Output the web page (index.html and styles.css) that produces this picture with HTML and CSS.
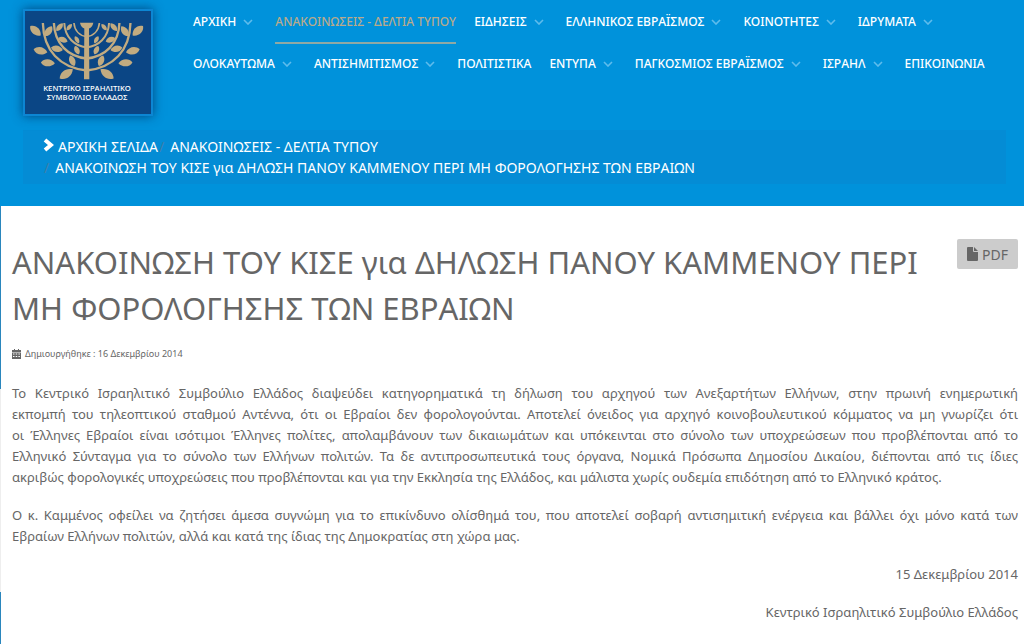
FILE: index.html
```html
<!DOCTYPE html>
<html lang="el">
<head>
<meta charset="UTF-8">
<meta name="viewport" content="width=device-width, initial-scale=1.0">
<title>Κεντρικό Ισραηλιτικό Συμβούλιο Ελλάδος</title>
<link rel="stylesheet" href="styles.css">
</head>
<body>

<svg class="symbols" aria-hidden="true">
    <symbol id="chevron" viewBox="0 0 10 6"><path d="M1 1l4 4 4-4" fill="none" stroke="currentColor" stroke-width="1.6"/></symbol>
</svg>

<header class="header">
    <div class="top">
        <a class="logo" href="#" aria-label="Αρχική">
            <svg viewBox="76 32 376 308">
                <g fill="none" stroke="#c2ab80" stroke-width="7">
                    <path d="M129 68C131 150 180 202 260 210C340 202 389 150 391 68"/>
                    <path d="M162 68C164 130 205 169 260 174C315 169 356 130 358 68"/>
                    <path d="M193 68C195 112 225 137 260 141C295 137 325 112 327 68" stroke-width="6"/>
                    <path d="M222 68C224 92 240 106 260 109C280 106 296 92 298 68" stroke-width="5"/>
                </g>
                <path fill="#c2ab80" d="M240 67h40q-3 14-13 17l1 152h-16l1-152q-10-3-13-17z"/>
                <g id="leaves" fill="#c2ab80">
                    <path transform="translate(107 91) rotate(42)" d="M-21 0C-12-15 10-15 21 0C10 15-12 15-21 0z"/>
                    <path transform="translate(146 92) rotate(-55)" d="M-18 0C-10-13 9-13 18 0C9 13-10 13-18 0z"/>
                    <path transform="translate(179 80) rotate(-50)" d="M-15 0C-8-10 7-10 15 0C7 10-8 10-15 0z"/>
                    <path transform="translate(208 80) rotate(-50)" d="M-12 0C-7-8 6-8 12 0C6 8-7 8-12 0z"/>
                    <path transform="translate(122 151) rotate(12)" d="M-21 0C-12-15 10-15 21 0C10 15-12 15-21 0z"/>
                    <path transform="translate(171 145) rotate(12)" d="M-18 0C-10-13 9-13 18 0C9 13-10 13-18 0z"/>
                    <path transform="translate(189 118) rotate(20)" d="M-15 0C-8-11 7-11 15 0C7 11-8 11-15 0z"/>
                    <path transform="translate(144 187) rotate(3)" d="M-21 0C-12-14 10-14 21 0C10 14-12 14-21 0z"/>
                    <path transform="translate(199 220) rotate(-35)" d="M-24 0C-12-16 10-16 24 0C10 16-12 16-24 0z"/>
                    <path transform="translate(217 181) rotate(68)" d="M-17 0C-9-12 8-12 17 0C8 12-9 12-17 0z"/>
                    <path transform="translate(231 149) rotate(65)" d="M-14 0C-8-10 7-10 14 0C7 10-8 10-14 0z"/>
                    <path transform="translate(231 118) rotate(60)" d="M-12 0C-7-8 6-8 12 0C6 8-7 8-12 0z"/>
                </g>
                <use href="#leaves" transform="translate(520 0) scale(-1 1)"/>
                <g class="logo-text">
                    <text x="261" y="272">ΚΕΝΤΡΙΚΟ ΙΣΡΑΗΛΙΤΙΚΟ</text>
                    <text x="261" y="298">ΣΥΜΒΟΥΛΙΟ ΕΛΛΑΔΟΣ</text>
                </g>
            </svg>
        </a>
        <nav>
            <ul class="menu">
                <li><a href="#">ΑΡΧΙΚΗ <svg class="chevron"><use href="#chevron"/></svg></a></li>
                <li><a class="active" href="#">ΑΝΑΚΟΙΝΩΣΕΙΣ - ΔΕΛΤΙΑ ΤΥΠΟΥ</a></li>
                <li><a href="#">ΕΙΔΗΣΕΙΣ <svg class="chevron"><use href="#chevron"/></svg></a></li>
                <li><a href="#">ΕΛΛΗΝΙΚΟΣ ΕΒΡΑΪΣΜΟΣ <svg class="chevron"><use href="#chevron"/></svg></a></li>
                <li><a href="#">ΚΟΙΝΟΤΗΤΕΣ <svg class="chevron"><use href="#chevron"/></svg></a></li>
                <li><a href="#">ΙΔΡΥΜΑΤΑ <svg class="chevron"><use href="#chevron"/></svg></a></li>
                <li><a href="#">ΟΛΟΚΑΥΤΩΜΑ <svg class="chevron"><use href="#chevron"/></svg></a></li>
                <li><a href="#">ΑΝΤΙΣΗΜΙΤΙΣΜΟΣ <svg class="chevron"><use href="#chevron"/></svg></a></li>
                <li><a href="#">ΠΟΛΙΤΙΣΤΙΚΑ</a></li>
                <li><a href="#">ΕΝΤΥΠΑ <svg class="chevron"><use href="#chevron"/></svg></a></li>
                <li><a href="#">ΠΑΓΚΟΣΜΙΟΣ ΕΒΡΑΪΣΜΟΣ <svg class="chevron"><use href="#chevron"/></svg></a></li>
                <li><a href="#">ΙΣΡΑΗΛ <svg class="chevron"><use href="#chevron"/></svg></a></li>
                <li><a href="#">ΕΠΙΚΟΙΝΩΝΙΑ</a></li>
            </ul>
        </nav>
    </div>
    <ol class="breadcrumb">
        <li><svg class="arrow" viewBox="0 0 11 14"><path d="M2 2l6 5-6 5" fill="none" stroke="#fff" stroke-width="4"/></svg><a href="#">ΑΡΧΙΚΗ ΣΕΛΙΔΑ</a></li>
        <li><a href="#">ΑΝΑΚΟΙΝΩΣΕΙΣ - ΔΕΛΤΙΑ ΤΥΠΟΥ</a></li>
        <li>ΑΝΑΚΟΙΝΩΣΗ ΤΟΥ ΚΙΣΕ για ΔΗΛΩΣΗ ΠΑΝΟΥ ΚΑΜΜΕΝΟΥ ΠΕΡΙ ΜΗ ΦΟΡΟΛΟΓΗΣΗΣ ΤΩΝ ΕΒΡΑΙΩΝ</li>
    </ol>
</header>

<main class="article">
    <div class="title">
        <h1>ΑΝΑΚΟΙΝΩΣΗ ΤΟΥ ΚΙΣΕ για ΔΗΛΩΣΗ ΠΑΝΟΥ ΚΑΜΜΕΝΟΥ ΠΕΡΙ ΜΗ ΦΟΡΟΛΟΓΗΣΗΣ ΤΩΝ ΕΒΡΑΙΩΝ</h1>
        <a class="pdf" href="#"><svg viewBox="0 0 11 14"><path fill="currentColor" d="M1 0h5v4q0 1 1 1h4v8q0 1-1 1H1q-1 0-1-1V1q0-1 1-1zM7 0l4 4H7z"/></svg>PDF</a>
    </div>
    <p class="date">
        <svg viewBox="0 0 9 10"><path fill="currentColor" fill-rule="evenodd" d="M0 1h2V0h1v1h3V0h1v1h2v2H0zM0 3.500h9V10H0zM1 4.500v1h1.500v-1zM3.700 4.500v1h1.500v-1zM6.400 4.500v1h1.500v-1zM1 7v1h1.500V7zM3.700 7v1h1.500V7zM6.400 7v1h1.500V7z"/></svg>
        <span>Δημιουργήθηκε : 16 Δεκεμβρίου 2014</span>
    </p>
    <p>
        <span class="line">Το Κεντρικό Ισραηλιτικό Συμβούλιο Ελλάδος διαψεύδει κατηγορηματικά τη δήλωση του αρχηγού των Ανεξαρτήτων Ελλήνων, στην πρωινή ενημερωτική</span>
        <span class="line">εκπομπή του τηλεοπτικού σταθμού Αντέννα, ότι οι Εβραίοι δεν φορολογούνται. Αποτελεί όνειδος για αρχηγό κοινοβουλευτικού κόμματος να μη γνωρίζει ότι</span>
        <span class="line">οι Έλληνες Εβραίοι είναι ισότιμοι Έλληνες πολίτες, απολαμβάνουν των δικαιωμάτων και υπόκεινται στο σύνολο των υποχρεώσεων που προβλέπονται από το</span>
        <span class="line">Ελληνικό Σύνταγμα για το σύνολο των Ελλήνων πολιτών. Τα δε αντιπροσωπευτικά τους όργανα, Νομικά Πρόσωπα Δημοσίου Δικαίου, διέπονται από τις ίδιες</span>
        ακριβώς φορολογικές υποχρεώσεις που προβλέπονται και για την Εκκλησία της Ελλάδος, και μάλιστα χωρίς ουδεμία επιδότηση από το Ελληνικό κράτος.
    </p>
    <p>
        <span class="line">Ο κ. Καμμένος οφείλει να ζητήσει άμεσα συγνώμη για το επικίνδυνο ολίσθημά του, που αποτελεί σοβαρή αντισημιτική ενέργεια και βάλλει όχι μόνο κατά των</span>
        Εβραίων Ελλήνων πολιτών, αλλά και κατά της ίδιας της Δημοκρατίας στη χώρα μας.
    </p>
    <p class="sign">15 Δεκεμβρίου 2014</p>
    <p class="sign">Κεντρικό Ισραηλιτικό Συμβούλιο Ελλάδος</p>
</main>

</body>
</html>
```
FILE: styles.css
```css
* {
    box-sizing: border-box;
}
body {
    display: flex;
    flex-direction: column;
    min-height: 100vh;
    font-family: "Noto Sans", "Open Sans", sans-serif;
    font-size: 14px;
    line-height: 21px;
    color: #666;
    background-color: #fff;
    margin: 0;
}
a {
    color: inherit;
    text-decoration: none;
}
.symbols {
    display: none;
}
.header {
    background-color: #0092db;
    color: #fff;
    padding: 9px 18px 22px 23px;
}
.top {
    display: flex;
    gap: 40px;
}
.logo {
    flex: none;
    width: 130px;
    height: 107px;
    border: 2px solid #0c86d3;
    background-color: #0b4685;
    box-shadow: 0 0 10px rgba(0, 40, 90, 0.7);
}
.logo svg {
    display: block;
    width: 100%;
    height: 100%;
}
.logo-text {
    fill: #fff;
    font-size: 23px;
    font-weight: 500;
    text-anchor: middle;
}
.menu {
    display: flex;
    flex-wrap: wrap;
    column-gap: 18px;
    list-style: none;
    margin: 0;
    padding: 0;
}
.menu a {
    display: flex;
    align-items: center;
    height: 35px;
    padding-bottom: 9px;
    margin-bottom: 7px;
    font-size: 12px;
    font-weight: 500;
    border-bottom: 2px solid transparent;
}
.menu .active {
    color: #b9aa8b;
    border-bottom-color: #8fa9a4;
}
.chevron {
    width: 10px;
    height: 6px;
    margin: 2px 4px 0 7px;
    color: #5fbcec;
}
.breadcrumb {
    display: flex;
    flex-wrap: wrap;
    list-style: none;
    margin: 14px 0 0;
    padding: 6px 20px;
    background-color: #048cd5;
}
.breadcrumb li + li::before {
    content: "/";
    color: #3f7fa8;
    padding: 0 6px 0 1px;
}
.breadcrumb li:last-child {
    flex-basis: 100%;
}
.arrow {
    width: 11px;
    height: 14px;
    margin-right: 4px;
}
.article {
    flex: 1;
    padding: 33px 6px 8px 11px;
    border-left: 1px solid;
    border-image: linear-gradient(#2a86bd 183px, #eee 183px, #eee 385px, #2a86bd 385px) 1;
}
.article p {
    font-size: 13px;
    margin: 0 0 17px;
}
/* full lines of a justified paragraph */
.line {
    display: block;
    text-align-last: justify;
}
.title {
    display: flex;
    justify-content: space-between;
    align-items: flex-start;
    gap: 30px;
}
h1 {
    font-size: 31px;
    line-height: 46px;
    font-weight: 400;
    margin: 0;
}
.pdf {
    flex: none;
    display: flex;
    align-items: center;
    gap: 4px;
    height: 30px;
    padding: 0 10px;
    background-color: #ccc;
    border-radius: 2px;
}
.pdf svg {
    width: 11px;
    height: 14px;
}
.article .date {
    display: flex;
    align-items: center;
    gap: 4px;
    margin: 12px 0 19px;
    font-size: 9px;
}
.date svg {
    width: 9px;
    height: 10px;
}
.article .sign {
    text-align: right;
}
.article .sign:last-child {
    margin-bottom: 0;
}
```
